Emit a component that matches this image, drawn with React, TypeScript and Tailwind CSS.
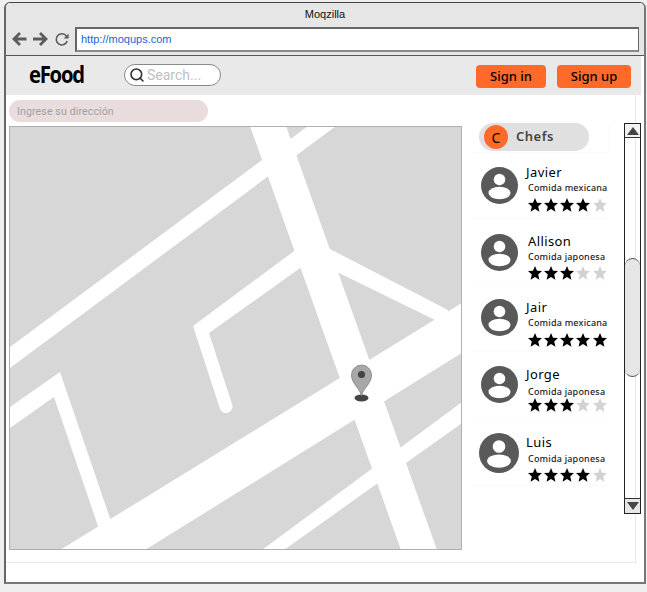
import { Search } from 'lucide-react';

interface Chef {
  name: string;
  food: string;
  stars: number;
  rowClass: string;
  avatarClass: string;
  textClass: string;
  foodClass: string;
  starsClass: string;
}

const chefs: Chef[] = [
  { name: 'Javier', food: 'Comida mexicana', stars: 4, rowClass: 'h-[66px] pl-[9px]', avatarClass: 'mt-[14px] w-[37px] h-[37px]', textClass: 'pt-[11px] ml-[8px]', foodClass: 'mt-[2px] ml-[2px]', starsClass: 'mt-[4px] ml-[1.5px]' },
  { name: 'Allison', food: 'Comida japonesa', stars: 3, rowClass: 'h-[66px] pl-[9px]', avatarClass: 'mt-[15px] w-[37px] h-[37px]', textClass: 'pt-[14px] ml-[10px]', foodClass: 'mt-[2px]', starsClass: 'mt-[3px] -ml-[0.5px]' },
  { name: 'Jair', food: 'Comida mexicana', stars: 5, rowClass: 'h-[67px] pl-[9px]', avatarClass: 'mt-[14px] w-[37px] h-[37px]', textClass: 'pt-[14px] ml-[8px]', foodClass: 'mt-[2px] ml-[2px]', starsClass: 'mt-[4px] ml-[1.5px]' },
  { name: 'Jorge', food: 'Comida japonesa', stars: 3, rowClass: 'h-[68px] pl-[9px]', avatarClass: 'mt-[14px] w-[37px] h-[37px]', textClass: 'pt-[14px] ml-[8px]', foodClass: 'mt-[4px] ml-[2px]', starsClass: 'mt-0 ml-[1.5px]' },
  { name: 'Luis', food: 'Comida japonesa', stars: 4, rowClass: 'h-[66px] pl-[7px]', avatarClass: 'mt-[13px] w-[40px] h-[40px]', textClass: 'pt-[14px] ml-[7px]', foodClass: 'mt-[3px] ml-[2px]', starsClass: 'mt-[3px] ml-[1.5px]' },
];

function Avatar({ className }: { className: string }) {
  return (
    <svg viewBox="0 0 37 37" className={`shrink-0 ${className}`}>
      <circle cx="18.5" cy="18.5" r="18.5" fill="#595959" />
      <circle cx="18.5" cy="12.5" r="5.8" fill="#fff" />
      <ellipse cx="18.5" cy="26" rx="11" ry="6.2" fill="#fff" />
    </svg>
  );
}

function Stars({ count, className }: { count: number; className: string }) {
  return (
    <div className={`flex gap-[2.25px] w-[80px] ${className}`}>
      {[1, 2, 3, 4, 5].map((n) => (
        <svg key={n} viewBox="0 0 14 14" className="w-[14px] h-[14px] shrink-0">
          <polygon
            points="7,0 9,4.75 14,5.1 10.2,8.55 11.4,13.7 7,10.9 2.6,13.7 3.8,8.55 0,5.1 5,4.75"
            fill={n <= count ? '#000' : '#d2d2d2'}
          />
        </svg>
      ))}
    </div>
  );
}

function MapDrawing() {
  return (
    <svg viewBox="10 127 451 422" className="w-full h-full block">
      <rect x="10" y="127" width="451" height="422" fill="#d7d7d7" />
      <g fill="#fff">
        <polygon points="308,126 336,126 10,368 10,347" />
        <polygon points="250,126 286,126 437,550 401,550" />
        <polygon points="328,248 448,310 445,326 433,319 337,272" />
        <polygon points="60,550 462,303 462,353 145,550" />
        <path d="M305,243 L193,326 L220,409 A6.5,6.5 0 0 0 232,404 L209,333 L310,261 Z" />
        <polygon points="10,407 60,372 112,524 100,532 54,397 10,428" />
        <polygon points="262,550 462,402 462,423 284,550" />
      </g>
      <ellipse cx="361.5" cy="398" rx="7" ry="3.4" fill="#444" />
      <path
        d="M361.5,396 C360,388 351.5,384 351.5,375 A10,10 0 0 1 371.5,375 C371.5,384 363,388 361.5,396 Z"
        fill="#a8a8a8"
        stroke="#808080"
        strokeWidth="0.8"
      />
      <circle cx="361.5" cy="374.5" r="3.6" fill="#444" />
    </svg>
  );
}

function NavIcons() {
  return (
    <svg viewBox="0 0 60 16" className="w-[60px] h-[16px] shrink-0 -mt-[1px]" fill="none" stroke="#5c5c5c">
      <path d="M14.5,8 H2 M8,2 L2,8 L8,14" strokeWidth="2.8" />
      <path d="M21,8 H34 M28,2 L34,8 L28,14" strokeWidth="2.8" />
      <path d="M54.5,5.2 A5.6,5.6 0 1 0 55.2,10" strokeWidth="1.6" />
      <polygon points="56.6,2.4 56.6,7.6 51.6,7.6" fill="#5c5c5c" stroke="none" />
    </svg>
  );
}

export default function App() {
  return (
    <div className="w-[647px] h-[592px] bg-[#efefef] pt-[2px] pl-[4px] overflow-hidden font-['Noto_Sans',sans-serif]">
      <div className="w-[642px] h-[582px] bg-white border-2 border-t border-[#777] border-t-[#444] border-l-[#666] rounded-t-[6px] overflow-hidden flex flex-col">
        {/* Browser bar */}
        <div className="h-[53px] shrink-0 bg-[#e6e6e6] border-b border-[#555] flex flex-col">
          <div className="h-[22px] flex items-center justify-center text-[11px] text-[#111] font-['Liberation_Sans',sans-serif]">
            Moqzilla
          </div>
          <div className="mt-[2px] flex items-center pl-[6px] pr-[5px]">
            <NavIcons />
            <div className="ml-[3px] h-[25px] flex-1 bg-white border border-[#666] border-t-2 border-l-2 border-b-2 border-b-[#888] flex items-center pl-[4px] text-[11px] text-[#1a5fe0] font-['Liberation_Sans',sans-serif]">
              http://moqups.com
            </div>
          </div>
        </div>

        {/* App header */}
        <div className="h-[39px] w-[635px] shrink-0 bg-[#e9e9e9] flex items-center pl-[24px]">
          <span className="w-[94px] text-[23px] leading-none font-bold text-black font-['Open_Sans',sans-serif] tracking-[-1.4px] scale-x-[0.88] origin-left -mt-[3px] -ml-[1px] mr-[1px]">
            eFood
          </span>
          <div className="w-[97px] h-[22px] -mt-[1px] bg-white border border-[#8a8a8a] rounded-full flex items-center pl-[4px] gap-[2px]">
            <Search className="w-[16px] h-[16px] text-[#333]" strokeWidth={2.4} />
            <span className="mt-[1px] text-[14px] text-[#c0c0c0] font-['Roboto',sans-serif]">Search...</span>
          </div>
          <button className="ml-[255px] mt-[2px] pt-[1px] w-[70px] h-[23px] bg-[#ff6a2b] rounded-[4px] text-[13px] font-medium text-black">
            Sign in
          </button>
          <button className="ml-[11px] mt-[2px] pt-[1px] w-[74px] h-[23px] bg-[#ff6a2b] rounded-[4px] text-[13px] font-medium text-black">
            Sign up
          </button>
        </div>

        {/* Body */}
        <div className="relative flex flex-1 min-h-0">
          <div className="w-[456px] shrink-0 pl-[3px] pt-[5px]">
            <div className="w-[199px] h-[22px] bg-[#e8dcdc] rounded-full flex items-center pl-[8px] pt-[1px] text-[10.5px] text-[#a0a0a0] font-['Roboto',sans-serif] tracking-[0.15px]">
              Ingrese su dirección
            </div>
            <div className="mt-[4px] w-[453px] h-[424px] border border-[#b0b0b0]">
              <MapDrawing />
            </div>
          </div>

          <div className="ml-[10px] w-[137px] shrink-0 pt-[28px]">
            <div className="h-[30px] border-b border-r border-[#fafafa] pl-[7px] flex items-start">
              <div className="w-[110px] h-[28px] bg-[#e0e0e0] rounded-full flex items-center pl-[5px]">
                <div className="w-[24px] h-[24px] rounded-full bg-[#ff6a2b] flex items-center justify-center text-[14px] text-black">
                  C
                </div>
                <span className="ml-[8px] text-[13px] font-semibold text-[#444] tracking-[0.5px]">Chefs</span>
              </div>
            </div>
            {chefs.map((c) => (
              <div key={c.name} className={`flex items-start border-b border-[#fbfbfb] ${c.rowClass}`}>
                <Avatar className={c.avatarClass} />
                <div className={c.textClass}>
                  <div className="h-[16px] leading-[16px] text-[13px] text-black tracking-[0.4px]">{c.name}</div>
                  <div className={`h-[12px] leading-[12px] text-[9px] font-medium text-[#222] tracking-[0.2px] whitespace-nowrap ${c.foodClass}`}>
                    {c.food}
                  </div>
                  <Stars count={c.stars} className={c.starsClass} />
                </div>
              </div>
            ))}
          </div>

          {/* Faint frame of the page inside the browser */}
          <div className="absolute left-0 top-0 w-[630px] h-[468px] border-r border-b border-[#e8e8e8] pointer-events-none" />

          {/* Scrollbar */}
          <div className="relative ml-[15px] mt-[28px] w-[17px] h-[391px] shrink-0 border border-[#222] flex flex-col">
            <div className="h-[14px] shrink-0 border-b border-[#333] bg-[#f2f2f2] flex items-center justify-center">
              <div className="w-0 h-0 border-l-[6px] border-r-[6px] border-b-[8px] border-l-transparent border-r-transparent border-b-[#444]" />
            </div>
            <div className="flex-1 pt-[120px]">
              <div className="h-[119px] bg-[#e6e6e6] border border-[#555] border-x-0 rounded-[8px]" />
            </div>
            <div className="h-[15px] shrink-0 border-t border-[#333] bg-[#e6e6e6] flex items-center justify-center">
              <div className="w-0 h-0 border-l-[6px] border-r-[6px] border-t-[8px] border-l-transparent border-r-transparent border-t-[#444]" />
            </div>
          </div>
        </div>
      </div>
    </div>
  );
}
